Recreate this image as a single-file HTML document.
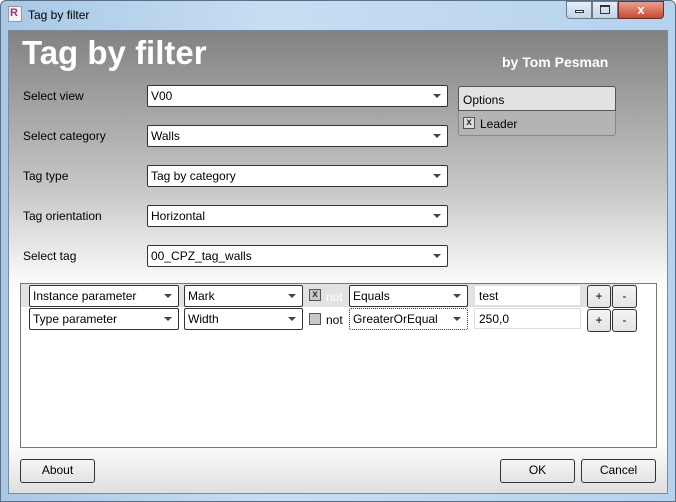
<!DOCTYPE html><html><head><style>
*{box-sizing:border-box;margin:0;padding:0}
body{width:676px;height:502px;overflow:hidden;font-family:"Liberation Sans",sans-serif;font-size:12px;background:#fff;position:relative}
.frame{position:absolute;left:0;top:0;width:676px;height:502px;background:linear-gradient(90deg,#a9c8e6,#c7def2 40%,#b6d2ee);border:1px solid #5a6e86;border-radius:6px 6px 0 0}
.client{position:absolute;left:8px;top:30px;width:660px;height:464px;border:1px solid #7a8a9c;background:linear-gradient(#828282 0px,#c8c8c8 160px,#fafafa 250px,#fff 270px,#fff 410px,#e0e0e0 460px)}
.a{position:absolute}
.combo{position:absolute;background:#fff;border:1px solid #333;border-radius:2px;height:22px;padding:3px 3px;white-space:nowrap;color:#000}
.combo:after{content:"";position:absolute;right:6px;top:8px;border-left:4px solid transparent;border-right:4px solid transparent;border-top:4px solid #444}
.lbl{position:absolute;color:#000}
.btn{position:absolute;background:linear-gradient(#f4f4f4,#e4e4e4);border:1px solid #333;border-radius:3px;text-align:center;line-height:21px;height:23px}
.cb{position:absolute;width:12px;height:12px;border:1px solid #555;background:#c8c8c8}
.tb{position:absolute;background:#fff;border:1px solid #ddd;height:21px;padding:3px 4px}
</style></head><body>
<div class="frame"></div>
<div class="a" style="left:8px;top:6px;width:14px;height:16px;background:#f4f4f4;border:1px solid #999;color:#a03080;font-weight:bold;font-size:11px;line-height:12px;padding-left:1px">R</div>
<div class="a" style="left:28px;top:8px;font-size:12px">Tag by filter</div>
<div class="a" style="left:566px;top:1px;width:26px;height:18px;border:1px solid #6a7a8a;border-radius:0 0 0 4px;background:linear-gradient(#e6eef7,#c4d4e6)"></div>
<div class="a" style="left:575px;top:10px;width:9px;height:3px;border:1px solid #333;background:#fff"></div>
<div class="a" style="left:592px;top:1px;width:26px;height:18px;border:1px solid #6a7a8a;background:linear-gradient(#e6eef7,#c4d4e6)"></div>
<div class="a" style="left:600px;top:5px;width:10px;height:9px;border:1px solid #333;border-top-width:2px"></div>
<div class="a" style="left:618px;top:1px;width:46px;height:18px;border:1px solid #6a3030;border-radius:0 0 4px 0;background:linear-gradient(#e8a090,#c84a30);color:#fff;font-weight:bold;text-align:center;line-height:16px;font-size:13px">x</div>
<div class="client"></div>
<div class="a" style="left:22px;top:34px;font-size:33px;font-weight:bold;color:#fff">Tag by filter</div>
<div class="a" style="left:502px;top:54px;font-size:14px;font-weight:bold;color:#fff">by Tom Pesman</div>
<div class="lbl" style="left:23px;top:89px">Select view</div>
<div class="lbl" style="left:23px;top:129px">Select category</div>
<div class="lbl" style="left:23px;top:169px">Tag type</div>
<div class="lbl" style="left:23px;top:209px">Tag orientation</div>
<div class="lbl" style="left:23px;top:249px">Select tag</div>
<div class="combo" style="left:147px;top:85px;width:301px">V00</div>
<div class="combo" style="left:147px;top:125px;width:301px">Walls</div>
<div class="combo" style="left:147px;top:165px;width:301px">Tag by category</div>
<div class="combo" style="left:147px;top:205px;width:301px">Horizontal</div>
<div class="combo" style="left:147px;top:245px;width:301px">00_CPZ_tag_walls</div>
<div class="a" style="left:458px;top:86px;width:158px;height:50px;border:1px solid #888;border-radius:3px;background:#b4b4b4"></div>
<div class="a" style="left:458px;top:86px;width:158px;height:25px;border:1px solid #555;border-radius:3px 3px 0 0;background:#e2e2e2;padding:6px 4px">Options</div>
<div class="cb" style="left:463px;top:117px;background:#ddd;font-size:10px;line-height:10px;text-align:center;font-weight:bold;color:#333">x</div>
<div class="lbl" style="left:480px;top:117px">Leader</div>
<div class="a" style="left:20px;top:283px;width:637px;height:165px;background:#fff;border:1px solid #777"></div>
<div class="a" style="left:21px;top:284px;width:616px;height:23px;background:#e2e2e2"></div>
<div class="combo" style="left:29px;top:285px;width:150px;height:22px">Instance parameter</div>
<div class="combo" style="left:184px;top:285px;width:119px;height:22px">Mark</div>
<div class="cb" style="left:309px;top:289px;font-size:10px;line-height:10px;text-align:center;font-weight:bold;color:#333">x</div>
<div class="lbl" style="left:326px;top:290px;color:#fff">not</div>
<div class="combo" style="left:349px;top:285px;width:119px;height:22px">Equals</div>
<div class="tb" style="left:474px;top:285px;width:107px">test</div>
<div class="btn" style="left:587px;top:285px;width:24px">+</div>
<div class="btn" style="left:612px;top:285px;width:25px">-</div>
<div class="combo" style="left:29px;top:308px;width:150px;height:22px">Type parameter</div>
<div class="combo" style="left:184px;top:308px;width:119px;height:22px">Width</div>
<div class="cb" style="left:309px;top:313px"></div>
<div class="lbl" style="left:326px;top:313px">not</div>
<div class="combo" style="left:349px;top:308px;width:119px;height:22px;border-style:dotted">GreaterOrEqual</div>
<div class="tb" style="left:474px;top:308px;width:107px">250,0</div>
<div class="btn" style="left:587px;top:309px;width:24px">+</div>
<div class="btn" style="left:612px;top:309px;width:25px">-</div>
<div class="btn" style="left:20px;top:459px;width:75px;height:24px">About</div>
<div class="btn" style="left:500px;top:459px;width:75px;height:24px">OK</div>
<div class="btn" style="left:581px;top:459px;width:75px;height:24px">Cancel</div>
</body></html>
